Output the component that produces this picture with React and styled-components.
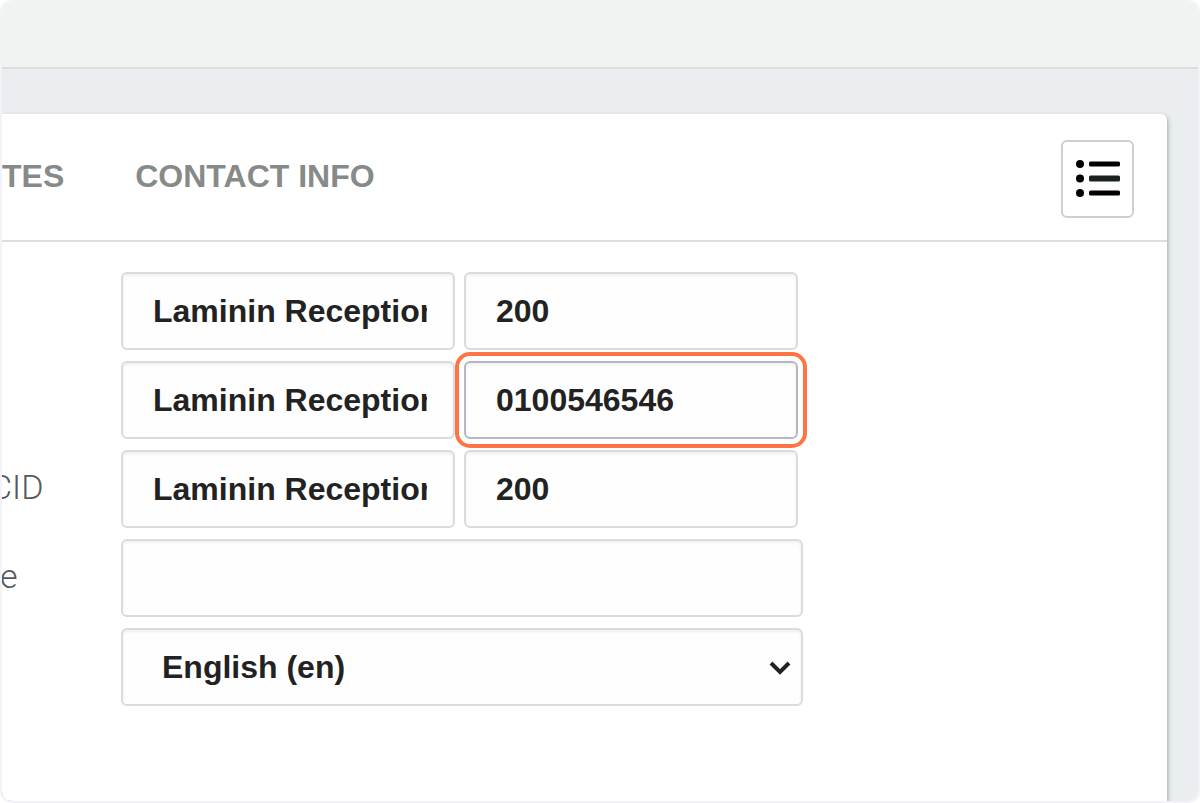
import React, { useState } from 'react'
import styled, { createGlobalStyle } from 'styled-components'

const callerRows = [
	{ id: 'internal', label: '', name: 'Laminin Reception', number: '200' },
	{ id: 'external', label: '', name: 'Laminin Reception', number: '0100546546', active: true },
	{ id: 'emergency', label: 'CID', name: 'Laminin Reception', number: '200', clipped: true },
]

const App = () => {
	const [rows, setRows] = useState(callerRows)
	const [zone, setZone] = useState('')
	const [language, setLanguage] = useState('en')

	const update = (id, key, value) => {
		setRows(rows.map(row => (row.id === id ? { ...row, [key]: value } : row)))
	}

	return (
		<>
			<GlobalStyle />
			<StyledFrame>
				<StyledTopBar />
				<StyledPage>
					<StyledCard>
						<StyledCardHeader>
							<StyledTabs>
								<StyledTab href='#notes'>TES</StyledTab>
								<StyledTab href='#contact'>CONTACT INFO</StyledTab>
							</StyledTabs>
							<StyledListButton type='button' aria-label='Show list'>
								<ListIcon />
							</StyledListButton>
						</StyledCardHeader>
						<StyledForm>
							{rows.map(row => (
								<StyledRow key={row.id}>
									<StyledLabel htmlFor={`${row.id}-name`} $clipped={row.clipped}>
										{row.label}
									</StyledLabel>
									<StyledInput
										id={`${row.id}-name`}
										aria-label={`${row.id} caller name`}
										value={row.name}
										onChange={e => update(row.id, 'name', e.target.value)}
									/>
									<StyledInput
										aria-label={`${row.id} caller number`}
										value={row.number}
										$active={row.active}
										onChange={e => update(row.id, 'number', e.target.value)}
									/>
								</StyledRow>
							))}
							<StyledRow>
								<StyledLabel htmlFor='zone'>e</StyledLabel>
								<StyledInput id='zone' $wide value={zone} onChange={e => setZone(e.target.value)} />
							</StyledRow>
							<StyledRow>
								<StyledLabel htmlFor='language' />
								<StyledSelectBox>
									<StyledSelect
										id='language'
										aria-label='Language'
										value={language}
										onChange={e => setLanguage(e.target.value)}
									>
										<option value='en'>English (en)</option>
									</StyledSelect>
									<StyledChevron viewBox='0 0 22 16' aria-hidden='true'>
										<path d='M2 3 L11 12 L20 3' />
									</StyledChevron>
								</StyledSelectBox>
							</StyledRow>
						</StyledForm>
					</StyledCard>
				</StyledPage>
			</StyledFrame>
		</>
	)
}

const ListIcon = () => (
	<svg width='46' height='40' viewBox='0 0 46 40' fill='#000' aria-hidden='true'>
		<circle cx='5' cy='5' r='4' />
		<circle cx='5' cy='19.5' r='4' />
		<circle cx='5' cy='34' r='4' />
		<rect x='14' y='2.5' width='31' height='5' rx='1.5' />
		<rect x='14' y='16.5' width='31' height='6' rx='1.5' fill='#1c201e' />
		<rect x='14' y='31.5' width='31' height='5' rx='1.5' />
	</svg>
)

const GlobalStyle = createGlobalStyle`
	* {
		box-sizing: border-box;
	}
	body {
		margin: 0;
		background: #fff;
		font-family: 'Liberation Sans', Arial, sans-serif;
	}
`
const StyledFrame = styled.div`
	display: flex;
	flex-direction: column;
	min-height: 100vh;
	border: 2px solid #f2f2f8;
	border-radius: 12px;
	overflow: hidden;
`
const StyledTopBar = styled.header`
	height: 67px;
	background: #f1f3f3;
	border-bottom: 2px solid #dcdedd;
`
const StyledPage = styled.main`
	flex: 1;
	display: flex;
	padding: 45px 31px 0 0;
	background: #eaeef1;
`
const StyledCard = styled.section`
	flex: 1;
	min-width: 0;
	background: #fff;
	border-top-right-radius: 6px;
	box-shadow: 1px 2px 4px rgba(90, 100, 105, 0.5);
`
const StyledCardHeader = styled.div`
	display: flex;
	align-items: center;
	justify-content: space-between;
	height: 128px;
	padding: 4px 33px 0 0;
	border-bottom: 2px solid #dcdedd;
`
const StyledTabs = styled.nav`
	display: flex;
	gap: 71px;
	padding-bottom: 6px;
`
const StyledTab = styled.a`
	color: #868a89;
	font-size: 32px;
	font-weight: bold;
	line-height: 36px;
	text-decoration: none;
`
const StyledListButton = styled.button`
	display: flex;
	align-items: center;
	justify-content: center;
	width: 73px;
	height: 78px;
	padding: 0;
	background: #fff;
	border: 2px solid #cfcfcf;
	border-radius: 6px;
	cursor: pointer;
`
const StyledForm = styled.form`
	display: flex;
	flex-direction: column;
	gap: 11px;
	padding: 30px 0;
`
const StyledRow = styled.div`
	display: flex;
	align-items: center;
	gap: 9px;
`
const StyledLabel = styled.label`
	flex: none;
	width: 110px;
	padding-bottom: 4px;
	overflow: hidden;
	text-indent: ${props => (props.$clipped ? '-12px' : '-2px')};
	color: #55595c;
	font-family: Roboto, sans-serif;
	font-size: 34px;
	font-weight: 300;
	line-height: 36px;
`
const StyledInput = styled.input`
	width: ${props => (props.$wide ? '682px' : '334px')};
	height: 78px;
	padding: 0 26px 0 30px;
	color: #222;
	background: #fefefe;
	border: 2px solid ${props => (props.$active ? '#b4b9c0' : '#d9dbdf')};
	border-radius: 6px;
	box-shadow: inset 0 2px 3px rgba(0, 0, 0, 0.06);
	font-family: inherit;
	font-size: 32px;
	font-weight: bold;
	outline: ${props => (props.$active ? '4px solid #ff7444' : 'none')};
	outline-offset: 5px;
	z-index: ${props => (props.$active ? 1 : 0)};
`
const StyledSelectBox = styled.div`
	position: relative;
	width: 682px;
`
const StyledSelect = styled(StyledInput).attrs({ as: 'select' })`
	display: block;
	width: 100%;
	padding-left: 39px;
	appearance: none;
`
const StyledChevron = styled.svg`
	position: absolute;
	top: 32px;
	right: 12px;
	width: 22px;
	height: 16px;
	fill: none;
	stroke: #222;
	stroke-width: 4;
	pointer-events: none;
`

export default App
